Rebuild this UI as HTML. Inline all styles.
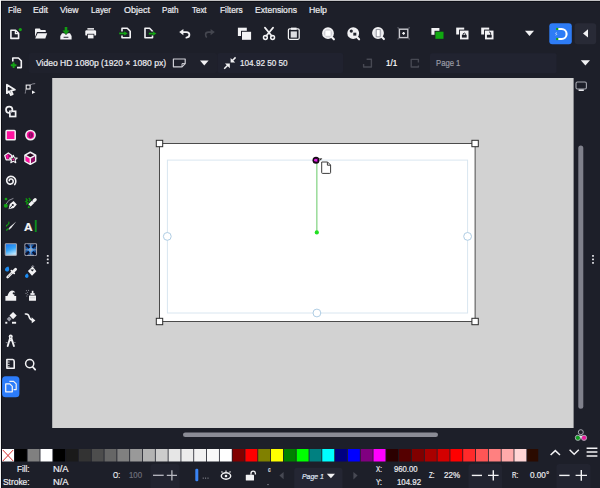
<!DOCTYPE html>
<html><head><meta charset="utf-8"><title>Inkscape</title>
<style>
html,body{margin:0;padding:0;background:#1d1f29;}
body{width:600px;height:488px;overflow:hidden;position:relative;font-family:"Liberation Sans",sans-serif;color:#ececf0;}
#app{position:absolute;left:0;top:0;width:600px;height:488px;background:#1d1f29;overflow:hidden;}
.t{position:absolute;white-space:nowrap;line-height:10px;transform-origin:0 0;-webkit-text-stroke:0.22px;}
.abs{position:absolute;}
svg{position:absolute;left:0;top:0;overflow:hidden;}
</style></head><body>
<div id="app">
<div class="abs" style="left:0;top:0;width:600px;height:1.6px;background:#0e0f16"></div>
<div class="abs" style="left:0;top:0;width:1.8px;height:488px;background:#0e0f16"></div>
<div class="abs" style="left:0;top:0;width:600px;height:0.9px;background:#c2c2c4"></div>
<div class="abs" style="left:0;top:0;width:1.1px;height:488px;background:#f2f2f2"></div>

<svg id="gfx" width="600" height="488" viewBox="0 0 600 488">
<rect x="52.2" y="78" width="521.4" height="350" fill="#d2d2d2"/>
<rect x="159.5" y="143.5" width="315.6" height="178" fill="#ffffff" stroke="#444444" stroke-width="0.95"/>
<rect x="167.4" y="160.1" width="300.2" height="152.9" fill="none" stroke="#d9e6f0" stroke-width="1"/>
<rect x="156.3" y="140.3" width="6.4" height="6.4" fill="#ffffff" stroke="#2c2c2c" stroke-width="1"/>
<rect x="471.90000000000003" y="140.3" width="6.4" height="6.4" fill="#ffffff" stroke="#2c2c2c" stroke-width="1"/>
<rect x="156.3" y="318.3" width="6.4" height="6.4" fill="#ffffff" stroke="#2c2c2c" stroke-width="1"/>
<rect x="471.90000000000003" y="318.3" width="6.4" height="6.4" fill="#ffffff" stroke="#2c2c2c" stroke-width="1"/>
<circle cx="167.3" cy="236.4" r="3.9" fill="#ffffff" stroke="#afcde4" stroke-width="1"/>
<circle cx="467.6" cy="236.4" r="3.9" fill="#ffffff" stroke="#afcde4" stroke-width="1"/>
<circle cx="316.9" cy="313" r="3.9" fill="#ffffff" stroke="#afcde4" stroke-width="1"/>
<line x1="316.8" y1="163" x2="316.8" y2="232" stroke="#9fdd9f" stroke-width="1.6"/>
<circle cx="316.8" cy="232.4" r="2.1" fill="#22e022"/>
<circle cx="316" cy="160.2" r="3.5" fill="#160816"/>
<path d="M314 160.2 L317.4 158.4 L317.4 162 Z" fill="#e418e4"/>
<circle cx="315.5" cy="160.2" r="1.4" fill="#e020e0"/>
<path d="M319 158.6 L322.3 158.2 L320.6 160.6 Z" fill="#333"/>
<path d="M321.7 162 L327.6 162 L330.6 165 L330.6 172.6 Q330.6 173.4 329.8 173.4 L322.5 173.4 Q321.7 173.4 321.7 172.6 Z" fill="#ffffff" stroke="#3c3c3c" stroke-width="1"/>
<path d="M327.4 162.2 L327.4 165.2 L330.4 165.2" fill="none" stroke="#3c3c3c" stroke-width="1"/>
<rect x="183" y="432.5" width="255" height="4.6" rx="2.3" fill="#8b8c96"/>
<rect x="578.3" y="145.4" width="5" height="263.3" rx="2.5" fill="#80818c"/>
<rect x="2.00" y="449" width="12.0" height="12.5" fill="#ffffff"/>
<path d="M2.80 450 L13.20 461 M13.20 450 L2.80 461" stroke="#d83030" stroke-width="1" fill="none"/>
<rect x="14.81" y="449" width="12.0" height="12.5" fill="#000000"/>
<rect x="27.62" y="449" width="12.0" height="12.5" fill="#808080"/>
<rect x="40.43" y="449" width="12.0" height="12.5" fill="#ffffff"/>
<rect x="53.24" y="449" width="12.0" height="12.5" fill="#000000"/>
<rect x="66.05" y="449" width="12.0" height="12.5" fill="#1a1a1a"/>
<rect x="78.86" y="449" width="12.0" height="12.5" fill="#333333"/>
<rect x="91.67" y="449" width="12.0" height="12.5" fill="#4d4d4d"/>
<rect x="104.48" y="449" width="12.0" height="12.5" fill="#666666"/>
<rect x="117.29" y="449" width="12.0" height="12.5" fill="#808080"/>
<rect x="130.10" y="449" width="12.0" height="12.5" fill="#999999"/>
<rect x="142.91" y="449" width="12.0" height="12.5" fill="#b3b3b3"/>
<rect x="155.72" y="449" width="12.0" height="12.5" fill="#cccccc"/>
<rect x="168.53" y="449" width="12.0" height="12.5" fill="#e6e6e6"/>
<rect x="181.34" y="449" width="12.0" height="12.5" fill="#ececec"/>
<rect x="194.15" y="449" width="12.0" height="12.5" fill="#f2f2f2"/>
<rect x="206.96" y="449" width="12.0" height="12.5" fill="#f9f9f9"/>
<rect x="219.77" y="449" width="12.0" height="12.5" fill="#ffffff"/>
<rect x="232.58" y="449" width="12.0" height="12.5" fill="#800000"/>
<rect x="245.39" y="449" width="12.0" height="12.5" fill="#ff0000"/>
<rect x="258.20" y="449" width="12.0" height="12.5" fill="#808000"/>
<rect x="271.01" y="449" width="12.0" height="12.5" fill="#ffff00"/>
<rect x="283.82" y="449" width="12.0" height="12.5" fill="#008000"/>
<rect x="296.63" y="449" width="12.0" height="12.5" fill="#00ff00"/>
<rect x="309.44" y="449" width="12.0" height="12.5" fill="#008080"/>
<rect x="322.25" y="449" width="12.0" height="12.5" fill="#00ffff"/>
<rect x="335.06" y="449" width="12.0" height="12.5" fill="#000080"/>
<rect x="347.87" y="449" width="12.0" height="12.5" fill="#0000ff"/>
<rect x="360.68" y="449" width="12.0" height="12.5" fill="#800080"/>
<rect x="373.49" y="449" width="12.0" height="12.5" fill="#ff00ff"/>
<rect x="386.30" y="449" width="12.0" height="12.5" fill="#2b0000"/>
<rect x="399.11" y="449" width="12.0" height="12.5" fill="#550000"/>
<rect x="411.92" y="449" width="12.0" height="12.5" fill="#800000"/>
<rect x="424.73" y="449" width="12.0" height="12.5" fill="#aa0000"/>
<rect x="437.54" y="449" width="12.0" height="12.5" fill="#d40000"/>
<rect x="450.35" y="449" width="12.0" height="12.5" fill="#ff0000"/>
<rect x="463.16" y="449" width="12.0" height="12.5" fill="#ff2a2a"/>
<rect x="475.97" y="449" width="12.0" height="12.5" fill="#ff5555"/>
<rect x="488.78" y="449" width="12.0" height="12.5" fill="#ff8080"/>
<rect x="501.59" y="449" width="12.0" height="12.5" fill="#ffaaaa"/>
<rect x="514.40" y="449" width="12.0" height="12.5" fill="#ffd5d5"/>
<rect x="527.21" y="449" width="11" height="12.5" fill="#2b0b00"/>

<path d="M10.9 30.3 L15.6 30.3 L18.6 33.3 L18.6 38.4 L10.9 38.4 Z" fill="none" stroke="#f2f2f4" stroke-width="1.6" stroke-linejoin="round"/>
<path d="M15.4 30.5 L15.4 33.6 L18.4 33.6" fill="none" stroke="#f2f2f4" stroke-width="1.3" />
<circle cx="20.3" cy="29.6" r="1.6" fill="#14a514"/>
<path d="M35 29.3 Q35 28.5 35.8 28.5 L39.8 28.5 L40.8 30 L45 30 Q45.8 30 45.8 30.8 L45.8 32 L37 32 L35 37 Z" fill="#f2f2f4" />
<path d="M37.6 33.3 L47.2 33.3 L45.3 38.6 L35.2 38.6 Z" fill="#f2f2f4" />
<path d="M62 33.3 L70 33.3 L71.6 36 L71.6 39.5 L60.3 39.5 L60.3 36 Z" fill="#f2f2f4" />
<path d="M64.7 26.9 L67.3 26.9 L67.3 30.4 L69.6 30.4 L66 34.6 L62.4 30.4 L64.7 30.4 Z" fill="#129c12" stroke="#1d1f29" stroke-width="0.9" paint-order="stroke"/>
<path d="M63.6 37.3 L68.4 37.3" fill="none" stroke="#3a3c46" stroke-width="1.1" />
<rect x="87.4" y="28" width="6.6" height="1.7" fill="#d6d6da"/>
<rect x="85.3" y="30.2" width="10.8" height="5.4" rx="1.2" fill="#f2f2f4"/>
<rect x="87.1" y="33.8" width="7.2" height="5.2" fill="#1d1f29"/>
<rect x="87.9" y="34.6" width="5.6" height="3.8" fill="#f2f2f4"/>
<path d="M122 31.6 L122 28.3 L127.3 28.3 L130.2 31.2 L130.2 37.8 L122 37.8 L122 35.4" fill="none" stroke="#f2f2f4" stroke-width="1.6" stroke-linejoin="round"/>
<path d="M119.2 33.4 L125 33.4" fill="none" stroke="#14a514" stroke-width="1.7" />
<path d="M124.2 31.2 L127.6 33.4 L124.2 35.6 Z" fill="#14a514" />
<path d="M152.5 31.6 L152.5 31.2 L149.6 28.3 L145 28.3 L145 37.8 L152.5 37.8 L152.5 35.4" fill="none" stroke="#f2f2f4" stroke-width="1.6" stroke-linejoin="round"/>
<path d="M148.8 33.6 L154 33.6" fill="none" stroke="#14a514" stroke-width="1.7" />
<path d="M153 31.4 L156.4 33.6 L153 35.8 Z" fill="#14a514" />
<path d="M179.2 32.1 L183.4 28.9 L183.4 35.3 Z" fill="#f2f2f4" />
<path d="M183 32.1 L186.4 32.1 Q189.4 32.1 189.4 34.8 Q189.4 37.4 186.4 37.6" fill="none" stroke="#f2f2f4" stroke-width="1.8" stroke-linecap="round"/>
<path d="M214.8 32.1 L210.6 28.9 L210.6 35.3 Z" fill="#44464f" />
<path d="M211 32.1 L208.4 32.1 Q205.6 32.1 205.6 34.6 Q205.6 36.4 206.4 37" fill="none" stroke="#44464f" stroke-width="1.6" stroke-linecap="round"/>
<rect x="237.9" y="27.7" width="8.9" height="8.3" fill="#f2f2f4"/>
<rect x="241" y="30.8" width="10.1" height="9" fill="#1d1f29"/>
<rect x="242" y="31.8" width="9.1" height="8" fill="#f2f2f4"/>
<path d="M264.9 27.6 L271.8 36 M273.1 27.6 L266.2 36" fill="none" stroke="#f2f2f4" stroke-width="1.7" stroke-linecap="round"/>
<circle cx="265.4" cy="37.5" r="1.9" fill="none" stroke="#f2f2f4" stroke-width="1.5"/>
<circle cx="272.6" cy="37.5" r="1.9" fill="none" stroke="#f2f2f4" stroke-width="1.5"/>
<rect x="288.4" y="28.9" width="10.8" height="10.4" rx="1.2" fill="none" stroke="#f2f2f4" stroke-width="1.2"/>
<rect x="291" y="27.6" width="5.6" height="2.2" fill="#f2f2f4"/>
<rect x="290.7" y="31.4" width="6.2" height="6.2" fill="#dcdce0"/>
<circle cx="328" cy="33.2" r="5.1" fill="#d0d0d6" stroke="#f2f2f4" stroke-width="1.6"/>
<path d="M331.9 37.300000000000004 L333.9 39.300000000000004" fill="none" stroke="#f2f2f4" stroke-width="2.1" stroke-linecap="round"/>
<rect x="325.4" y="30.6" width="5.2" height="5.2" fill="#ffffff"/>
<circle cx="353.2" cy="33.2" r="5.1" fill="#f0f0f2" stroke="#f2f2f4" stroke-width="1.6"/>
<path d="M357.09999999999997 37.300000000000004 L359.09999999999997 39.300000000000004" fill="none" stroke="#f2f2f4" stroke-width="2.1" stroke-linecap="round"/>
<circle cx="351.3" cy="31.1" r="1.6" fill="#23252f"/>
<rect x="353.3" y="32.7" width="3" height="2.9" fill="#23252f"/>
<circle cx="378" cy="33" r="5.1" fill="#e4e4e8" stroke="#f2f2f4" stroke-width="1.6"/>
<path d="M381.9 37.1 L383.9 39.1" fill="none" stroke="#f2f2f4" stroke-width="2.1" stroke-linecap="round"/>
<rect x="376.2" y="29.6" width="4" height="7.2" fill="#ffffff" stroke="#8d8e98" stroke-width="0.9"/>
<rect x="399.4" y="29.2" width="8.4" height="8.4" fill="none" stroke="#c9c9cf" stroke-width="1.4"/>
<path d="M402.2 33.4 L405 33.4 M403.6 32 L403.6 34.8" fill="none" stroke="#f2f2f4" stroke-width="1.3" />
<path d="M397.6 27.4 L398.7 28.5 M409.6 27.4 L408.5 28.5 M397.6 39.4 L398.7 38.3 M409.6 39.4 L408.5 38.3" fill="none" stroke="#6a6c76" stroke-width="1.1" />
<rect x="431.4" y="28" width="8" height="6.8" fill="#f2f2f4"/>
<rect x="434.5" y="30.8" width="9.2" height="8.2" fill="#1d1f29"/>
<rect x="435.4" y="31.7" width="8.1" height="7.1" fill="#10a810"/>
<rect x="456.2" y="27.6" width="8" height="6.9" fill="#f2f2f4"/>
<rect x="459.09999999999997" y="29.6" width="10.4" height="10.6" fill="#1d1f29"/>
<rect x="460.0" y="30.6" width="8.5" height="8.8" fill="#f2f2f4"/>
<rect x="461.9" y="34.8" width="4.8" height="2.8" fill="#1d1f29"/>
<path d="M463.1 34.8 L463.1 33.8 Q464.3 32.2 465.5 33.8 L465.5 34.8" fill="none" stroke="#1d1f29" stroke-width="0.9" />
<rect x="481.2" y="27.6" width="8" height="6.9" fill="#f2f2f4"/>
<rect x="484.09999999999997" y="29.6" width="10.4" height="10.6" fill="#1d1f29"/>
<rect x="485.0" y="30.6" width="8.5" height="8.8" fill="#f2f2f4"/>
<rect x="486.9" y="34.8" width="4.8" height="2.8" fill="#1d1f29"/>
<path d="M490.6 34.8 L490.6 32.6 Q490 31.8 489 32.2" fill="none" stroke="#1d1f29" stroke-width="0.9" />
<path d="M525 30.8 L534 30.8 L529.5 36 Z" fill="#f2f2f4" />
<rect x="549.3" y="23.3" width="22.5" height="21" rx="3" fill="#2e7cf6"/>
<path d="M557.8 29 L561.6 29 A5 5 0 0 1 561.6 39 L557.8 39" fill="none" stroke="#ffffff" stroke-width="2.1" />
<rect x="556.2" y="27.9" width="2.1" height="2.2" fill="#14a514"/>
<rect x="556.2" y="37.9" width="2.1" height="2.2" fill="#14a514"/>
<path d="M556.8 32.6 L555.6 33.2 L556.8 34.4 L555.6 35.2" fill="none" stroke="#e8f0ff" stroke-width="0.7" />
<rect x="574.6" y="23.3" width="21.6" height="21" rx="3" fill="#282a36"/>
<path d="M583 33.4 L588 29.2 L588 37.6 Z" fill="#f2f2f4" />
<rect x="28.5" y="53" width="188.5" height="20" rx="2" fill="#1f212c"/>
<rect x="217.6" y="53" width="125.6" height="20" rx="2" fill="#20222f"/>
<rect x="430" y="53.2" width="126.6" height="20" rx="2" fill="#212330"/>
<path d="M12.8 61.4 L12.8 58 L18.4 58 L21.3 60.9 L21.3 67.6 L17 67.6" fill="none" stroke="#f2f2f4" stroke-width="1.6" stroke-linejoin="round"/>
<path d="M17 60 L18.8 60 L18.8 62 M18.8 62.4 L18.8 65.4 L17.4 65.4" fill="none" stroke="#191b24" stroke-width="1" />
<path d="M13.6 62.4 L13.6 68 M10.8 65.2 L16.4 65.2" fill="none" stroke="#14a514" stroke-width="1.9" />
<path d="M173.4 59 L185.2 59 L185.2 63.6 L182 66.8 L173.4 66.8 Z" fill="none" stroke="#cfcfd6" stroke-width="1.2" stroke-linejoin="round"/>
<path d="M185.2 63.6 L182 63.6 L182 66.8" fill="none" stroke="#cfcfd6" stroke-width="1.0" />
<path d="M200 60.6 L208.6 60.6 L204.3 65.6 Z" fill="#f2f2f4" />
<path d="M230.6 58 L230.6 62.6 L235.2 62.6 Z" fill="#f2f2f4" />
<path d="M235.6 57.4 L232.2 60.8" fill="none" stroke="#f2f2f4" stroke-width="1.5" />
<path d="M225 63.4 L229.8 63.4 L229.8 68.2 Z" fill="#f2f2f4" />
<path d="M224.2 68.8 L228 65" fill="none" stroke="#f2f2f4" stroke-width="1.5" />
<path d="M366.6 59.2 L371.4 59.2 L371.4 67 L363.6 67 L363.6 64" fill="none" stroke="#474953" stroke-width="1.4" stroke-linejoin="round"/>
<path d="M418.4 62.4 L418.4 59.4 L411.2 59.4 L411.2 67 L418.4 67 L418.4 65.6" fill="none" stroke="#474953" stroke-width="1.4" stroke-linejoin="round"/>
<path d="M580.8 60.2 L590 60.2 L585.4 65.4 Z" fill="#f2f2f4" />
<rect x="576" y="82" width="10.4" height="7" rx="1.4" fill="none" stroke="#a6a7b0" stroke-width="1.1"/>
<rect x="578.6" y="89.4" width="5.2" height="1.6" fill="#e8e8ec"/>
<rect x="46.8" y="254.95000000000002" width="1.9" height="1.9" rx="0.5" fill="#e4e4e8"/>
<rect x="592.05" y="254.95000000000002" width="1.9" height="1.9" rx="0.5" fill="#e4e4e8"/>
<rect x="46.8" y="258.45" width="1.9" height="1.9" rx="0.5" fill="#e4e4e8"/>
<rect x="592.05" y="258.45" width="1.9" height="1.9" rx="0.5" fill="#e4e4e8"/>
<rect x="46.8" y="261.95" width="1.9" height="1.9" rx="0.5" fill="#e4e4e8"/>
<rect x="592.05" y="261.95" width="1.9" height="1.9" rx="0.5" fill="#e4e4e8"/>
<path d="M6.9 84.8 L6.9 93.2 L9.1 91.3 L10.9 95 L12.7 94.1 L11 90.6 L14.9 89.7 Z" fill="none" stroke="#f2f2f4" stroke-width="1.8" stroke-linejoin="round"/>
<path d="M30.2 85 Q32.6 83.6 35.2 83.6 M26 89.2 Q25.4 91.4 25.2 93.6" fill="none" stroke="#8e8f99" stroke-width="0.9" />
<rect x="26.2" y="85.1" width="3.9" height="3.9" fill="none" stroke="#f2f2f4" stroke-width="1.1"/>
<path d="M32 90.6 L35.4 92.3 L32 94.1 Z" fill="#f2f2f4" />
<circle cx="9.2" cy="109.8" r="3.2" fill="none" stroke="#f2f2f4" stroke-width="1.7"/>
<rect x="9.9" y="111.3" width="5.7" height="5.2" fill="#1d1f29" stroke="#f2f2f4" stroke-width="1.7"/>
<path d="M10 111.4 L12.3 111.4 Q12 113.2 10 113.6 Z" fill="#9c9da6" />
<rect x="6.1" y="130.6" width="9.1" height="9.2" rx="0.8" fill="#ff12a0" stroke="#f2f2f4" stroke-width="1.5"/>
<circle cx="30.5" cy="135.1" r="4.6" fill="#ff12a0" stroke="#f2f2f4" stroke-width="1.6"/>
<ellipse cx="30.7" cy="135.1" rx="2.3" ry="2.9" fill="#8c0a62"/>
<path d="M30.6 133.2 L30.6 137" fill="none" stroke="#c2128a" stroke-width="0.7" />
<path d="M8.3 152.9 L11.9 155.5 L10.5 159.8 L6.1 159.8 L4.7 155.5 Z" fill="#8c0a62" stroke="#f2f2f4" stroke-width="1.2" stroke-linejoin="round"/>
<path d="M6.2 155.4 L8.3 154 L8.6 158.6 L6.8 158.8 Z" fill="#ff12a0" />
<path d="M13.3 155.3 L14.4 157.9 L17.2 158.1 L15.1 159.9 L15.8 162.7 L13.3 161.2 L10.8 162.7 L11.5 159.9 L9.4 158.1 L12.2 157.9 Z" fill="#2a0a22" stroke="#f2f2f4" stroke-width="1.1" stroke-linejoin="round"/>
<circle cx="13.3" cy="159.4" r="0.9" fill="#ff12a0"/>
<path d="M30.3 152.2 L35.6 155.1 L35.6 161.2 L30.3 164.3 L25 161.2 L25 155.1 Z" fill="#2a0a22" stroke="#f2f2f4" stroke-width="1.6" stroke-linejoin="round"/>
<path d="M25.6 155.7 L30.3 158.4 L30.3 163.6 L25.6 160.9 Z" fill="#ff12a0" />
<path d="M35 155.7 L30.3 158.4 L30.3 163.6 L35 160.9 Z" fill="#8c0a62" />
<path d="M25 155.1 L30.3 158.2 L35.6 155.1 M30.3 158.2 L30.3 164.3" fill="none" stroke="#f2f2f4" stroke-width="1.4" />
<path d="M9.26 180.69 L9.26 180.32 L9.37 179.95 L9.58 179.59 L9.89 179.28 L10.30 179.06 L10.77 178.94 L11.29 178.95 L11.80 179.09 L12.29 179.38 L12.71 179.80 L13.01 180.33 L13.18 180.94 L13.19 181.61 L13.02 182.28 L12.68 182.91 L12.17 183.45 L11.53 183.85 L10.77 184.09 L9.96 184.14 L9.13 183.97 L8.35 183.59 L7.67 183.01 L7.15 182.26 L6.82 181.37 L6.72 180.41 L6.86 179.43 L7.26 178.49 L7.89 177.66 L8.74 177.00 L9.74 176.56 L10.85 176.38 L11.99 176.48 L13.09 176.87 L14.09 177.54 L14.90 178.46 L15.47 179.57 L15.74 180.82 L15.71 182.11 L15.34 183.39 L14.65 184.55" fill="none" stroke="#f2f2f4" stroke-width="1.6" stroke-linecap="round" stroke-linejoin="round"/>
<path d="M6.2 204 Q7.8 199.6 13.4 198.4" fill="none" stroke="#8e8f99" stroke-width="1.0" />
<circle cx="6" cy="199" r="1.35" fill="#14a514"/>
<circle cx="5.8" cy="205.7" r="2" fill="#14a514"/>
<path d="M8.6 209.2 L9.8 204 L13.6 201 L16.8 204.4 L13.8 208 Z" fill="#f2f2f4" />
<path d="M9.4 208.4 L12.6 205.2" fill="none" stroke="#1d1f29" stroke-width="1.0" />
<circle cx="12.8" cy="205" r="1.05" fill="#1d1f29"/>
<path d="M25.8 198.4 L27.4 200.2 L25.8 201.6 L28 202.8 L26.2 204.4 M28.8 198 L30.2 199.8 L29 201.4" fill="none" stroke="#0f9a0f" stroke-width="1.3" />
<path d="M27.6 208.3 L28.4 205.4 L30.4 207.4 Z" fill="#14a514" />
<path d="M29.5 205.4 L33 201.9" fill="none" stroke="#f2f2f4" stroke-width="3.3" />
<path d="M34 200.9 L35.2 199.7" fill="none" stroke="#f2f2f4" stroke-width="3.2" stroke-linecap="round"/>
<path d="M8.8 221.6 Q9.6 223.4 8 224.4 Q6 225.4 6.4 226.6" fill="none" stroke="#14a514" stroke-width="1.1" />
<path d="M6.6 230.6 Q7.2 228.6 8.6 229.2" fill="none" stroke="#14a514" stroke-width="1.5" />
<path d="M16.2 221.4 L10.6 228.8 L9.2 227.6 Z" fill="#f2f2f4" />
<path d="M9.9 228.2 L8.9 229.4" fill="none" stroke="#d0d0d6" stroke-width="1.2" />
<rect x="34.8" y="220" width="1.9" height="12" fill="#0c8e1e"/>
<defs><linearGradient id="gr1" x1="0.2" y1="0" x2="0.6" y2="1"><stop offset="0" stop-color="#1776ee"/><stop offset="0.5" stop-color="#36a4f6"/><stop offset="1" stop-color="#c6ecff"/></linearGradient><radialGradient id="gr2" cx="0.5" cy="0.5" r="0.6"><stop offset="0" stop-color="#9fd8ff"/><stop offset="0.45" stop-color="#1a74d8"/><stop offset="1" stop-color="#0a1838"/></radialGradient></defs>
<rect x="5.3" y="243.8" width="11.2" height="11.6" rx="0.8" fill="url(#gr1)" stroke="#a2a3ad" stroke-width="1.1"/>
<rect x="24.9" y="243.8" width="11.6" height="11.6" rx="0.8" fill="url(#gr2)" stroke="#a2a3ad" stroke-width="1.1"/>
<path d="M26 244.6 L29.4 248 M35.6 245 L32.4 248 M25.8 254.6 L29 251.6 M35.6 254.8 L32.6 251.8" fill="none" stroke="#0a1230" stroke-width="2.2" />
<path d="M30.7 244.2 L30.7 255 M25.2 249.8 L36.2 249.8" fill="none" stroke="#9c9da8" stroke-width="0.8" />
<path d="M8.4 266.6 Q10 269.6 8.4 271.2 Q6.2 272.4 5 270.2 Q4.6 267.6 8.4 266.6 Z" fill="#1b8cf2" />
<path d="M7.6 277.2 L12.4 272.4" fill="none" stroke="#f2f2f4" stroke-width="2.6" stroke-linecap="round"/>
<path d="M8.2 276.6 L11.4 273.4" fill="none" stroke="#1d1f29" stroke-width="0.7" stroke-dasharray="1 0.8"/>
<path d="M11.4 270.6 L14.2 273.4" fill="none" stroke="#f2f2f4" stroke-width="1.8" stroke-linecap="round"/>
<path d="M13.4 271.4 L15.6 269.2" fill="none" stroke="#f2f2f4" stroke-width="2.8" stroke-linecap="round"/>
<path d="M27.2 273.2 Q29.4 275.8 28 277.4 Q26.2 278.6 25 276.8 Q24.4 274.8 27.2 273.2 Z" fill="#1b8cf2" />
<path d="M32.6 266.6 L36.4 271.2 L32 275.8 L27.9 271 Z" fill="#f2f2f4" />
<path d="M30.4 269.4 L34 269.6 L32.4 271.4 Z" fill="#1d1f29" />
<path d="M31.4 267 L32.8 265.6 L34 266.8" fill="none" stroke="#c8c8d0" stroke-width="0.8" />
<path d="M5.4 296 L7.4 296 Q9 291 12 290.6 Q14.6 290.6 15.2 292.8 Q13.4 291.8 12.6 293 Q12.4 294.6 14.6 294.6 L14.2 296 L16.2 296 L16.2 300.8 L5.4 300.8 Z" fill="#f2f2f4" />
<rect x="29" y="295.6" width="7" height="5.2" rx="0.6" fill="#f2f2f4"/>
<rect x="30.4" y="293" width="4.2" height="2" fill="#dcdce2"/>
<rect x="31.8" y="290.8" width="1.6" height="2.4" fill="#f2f2f4"/>
<path d="M29.6 297.8 L35.4 297.8" fill="none" stroke="#c4c4cc" stroke-width="0.7" />
<circle cx="26.4" cy="290.6" r="0.55" fill="#8e8f99"/>
<circle cx="27.6" cy="292.2" r="0.55" fill="#8e8f99"/>
<circle cx="26" cy="293.4" r="0.55" fill="#8e8f99"/>
<circle cx="27.8" cy="294.6" r="0.55" fill="#8e8f99"/>
<circle cx="26.8" cy="296" r="0.55" fill="#8e8f99"/>
<circle cx="28.6" cy="290.4" r="0.55" fill="#8e8f99"/>
<path d="M13.1 312 L16.7 315.6 L13.1 319.2 L9.5 315.6 Z" fill="#f2f2f4" />
<path d="M9.2 316.6 L11.7 319.1 L9.2 321.6 L6.7 319.1 Z" fill="#9b9ca6" />
<rect x="5.3" y="321.8" width="2" height="1.9" fill="#f2f2f4"/>
<rect x="12" y="321.8" width="4.1" height="1.9" fill="#f2f2f4"/>
<path d="M25.4 314 Q28.4 313.6 29 316.4 Q29.6 319.4 32 320" fill="none" stroke="#f2f2f4" stroke-width="1.6" stroke-linecap="round"/>
<path d="M31.6 317.2 L35.4 320.4 L31.8 323.2 Z" fill="#f2f2f4" />
<path d="M10.7 336 L7.7 346 M10.7 336 L13.9 346" fill="none" stroke="#f2f2f4" stroke-width="1.9" stroke-linecap="round"/>
<circle cx="10.7" cy="336.6" r="2" fill="#f2f2f4"/>
<circle cx="10.7" cy="337" r="0.6" fill="#1d1f29"/>
<path d="M9 340.6 L12.4 340.6" fill="none" stroke="#f2f2f4" stroke-width="1.2" />
<path d="M5.8 342.6 L7.6 342.6 M13.8 342.6 L15.6 342.6" fill="none" stroke="#b0b0b8" stroke-width="0.7" />
<path d="M6.9 359.5 L12.6 359.5 Q14.2 359.7 14.2 361.4 L14.2 368.2 L6.9 368.2 Z" fill="none" stroke="#f2f2f4" stroke-width="1.6" stroke-linejoin="round"/>
<path d="M7.6 362 L9.6 362 M7.6 364.4 L9.6 364.4 M7.6 366.8 L9.6 366.8" fill="none" stroke="#f2f2f4" stroke-width="0.8" />
<circle cx="29.7" cy="363.6" r="4.1" fill="none" stroke="#f2f2f4" stroke-width="1.5"/>
<path d="M32.8 367 L35.2 369.6" fill="none" stroke="#f2f2f4" stroke-width="1.8" stroke-linecap="round"/>
<rect x="2.1" y="376.2" width="17.3" height="21.1" rx="3.5" fill="#2c7cfa"/>
<path d="M9.4 381.3 L13.6 381.3 L16.2 383.9 L16.2 389.6 L13.6 389.6" fill="none" stroke="#f2f2f4" stroke-width="1.2" stroke-linejoin="round"/>
<path d="M5.7 383.9 L9.8 383.9 L12.3 386.4 L12.3 391.8 L5.7 391.8 Z" fill="none" stroke="#f2f2f4" stroke-width="1.3" stroke-linejoin="round"/>
<rect x="150.5" y="464" width="29" height="26" rx="3" fill="#222430"/>
<rect x="468.5" y="464" width="33.5" height="26" rx="3" fill="#222430"/>
<rect x="556.5" y="464" width="34" height="26" rx="3" fill="#222430"/>
<path d="M153 475.3 L163.7 475.3" fill="none" stroke="#b9bac2" stroke-width="1.3" />
<path d="M166.8 475.3 L177 475.3 M171.9 470.3 L171.9 480.6" fill="none" stroke="#b9bac2" stroke-width="1.3" />
<rect x="195.3" y="468.8" width="3" height="12.5" rx="1.2" fill="#3a84f4"/>
<circle cx="203.2" cy="478.1" r="0.6" fill="#9a9ba5"/>
<circle cx="205.6" cy="478.1" r="0.6" fill="#9a9ba5"/>
<circle cx="208" cy="478.1" r="0.6" fill="#9a9ba5"/>
<ellipse cx="226" cy="476" rx="4.7" ry="3.2" fill="none" stroke="#f2f2f4" stroke-width="1.4"/>
<circle cx="226" cy="476" r="1.3" fill="#f2f2f4"/>
<path d="M222.4 472.6 L221.6 471.4 M226 471.9 L226 470.6 M229.6 472.6 L230.4 471.4" fill="none" stroke="#f2f2f4" stroke-width="1.1" />
<rect x="245.8" y="474.8" width="8.2" height="5.8" rx="0.6" fill="#f2f2f4"/>
<path d="M251 474.8 L251 473.4 Q251 471.2 253.2 471.2 Q255.4 471.2 255.4 473.4 L255.4 474.4" fill="none" stroke="#f2f2f4" stroke-width="1.3" />
<circle cx="268" cy="484.6" r="0.6" fill="#b0b0b8"/>
<rect x="294.2" y="467.8" width="48.3" height="24" rx="3" fill="#242633"/>
<path d="M279.4 475.6 L283.6 472 L283.6 479.2 Z" fill="#474953" />
<path d="M357.6 475.6 L353.4 472 L353.4 479.4 Z" fill="#474953" />
<path d="M326.8 473.8 L335 473.8 L330.9 478.3 Z" fill="#f2f2f4" />
<path d="M471.8 475.4 L482 475.4" fill="none" stroke="#f2f2f4" stroke-width="1.4" />
<path d="M488 475.4 L498.6 475.4 M493.3 470.2 L493.3 480.6" fill="none" stroke="#f2f2f4" stroke-width="1.4" />
<path d="M559.2 475.4 L569.6 475.4" fill="none" stroke="#f2f2f4" stroke-width="1.4" />
<path d="M575.6 475.4 L587 475.4 M581.3 470 L581.3 480.8" fill="none" stroke="#f2f2f4" stroke-width="1.4" />
<path d="M550.6 455 L555.3 450.6 L560 455" fill="none" stroke="#f2f2f4" stroke-width="1.5" />
<path d="M569.6 449.8 L574.2 454.2 L578.8 449.8" fill="none" stroke="#f2f2f4" stroke-width="1.5" />
<path d="M586.6 448.2 L597.4 448.2 M586.6 452.1 L597.4 452.1 M586.6 456 L597.4 456" fill="none" stroke="#f2f2f4" stroke-width="1.5" />
<circle cx="580.8" cy="432.2" r="2.5" fill="none" stroke="#a8a9b2" stroke-width="1"/>
<circle cx="577.9" cy="437.8" r="2.6" fill="#10a020" stroke="#a8a9b2" stroke-width="1"/>
<circle cx="584" cy="437.8" r="2.6" fill="#e8189c" stroke="#a8a9b2" stroke-width="1"/>
<circle cx="580.9" cy="436.6" r="1.2" fill="#e6e6ea"/>

</svg>
<div id="labels">
<span class="t" style="left:7.60px;top:4.94px;font-size:9.7px;color:#ececf0;transform:scaleX(0.8445);">File</span>
<span class="t" style="left:33.00px;top:4.94px;font-size:9.7px;color:#ececf0;transform:scaleX(0.8974);">Edit</span>
<span class="t" style="left:60.00px;top:4.94px;font-size:9.7px;color:#ececf0;transform:scaleX(0.8921);">View</span>
<span class="t" style="left:91.00px;top:4.94px;font-size:9.7px;color:#ececf0;transform:scaleX(0.8243);">Layer</span>
<span class="t" style="left:124.00px;top:4.94px;font-size:9.7px;color:#ececf0;transform:scaleX(0.9274);">Object</span>
<span class="t" style="left:162.40px;top:4.94px;font-size:9.7px;color:#ececf0;transform:scaleX(0.8319);">Path</span>
<span class="t" style="left:192.40px;top:4.94px;font-size:9.7px;color:#ececf0;transform:scaleX(0.8207);">Text</span>
<span class="t" style="left:219.60px;top:4.94px;font-size:9.7px;color:#ececf0;transform:scaleX(0.8635);">Filters</span>
<span class="t" style="left:255.00px;top:4.94px;font-size:9.7px;color:#ececf0;transform:scaleX(0.8852);">Extensions</span>
<span class="t" style="left:309.40px;top:4.94px;font-size:9.7px;color:#ececf0;transform:scaleX(0.9023);">Help</span>
<span class="t" style="left:35.80px;top:57.94px;font-size:9.7px;color:#ececf0;transform:scaleX(0.8838);">Video HD 1080p (1920 × 1080 px)</span>
<span class="t" style="left:240.00px;top:57.94px;font-size:9.7px;color:#ececf0;transform:scaleX(0.8422);">104.92 50 50</span>
<span class="t" style="left:385.90px;top:57.94px;font-size:9.7px;color:#ffffff;transform:scaleX(0.8380);">1/1</span>
<span class="t" style="left:435.60px;top:57.94px;font-size:9.7px;color:#9b9ca6;transform:scaleX(0.7937);">Page 1</span>
<span class="t" style="left:17.00px;top:464.28px;font-size:9.3px;color:#ececf0;transform:scaleX(0.8712);">Fill:</span>
<span class="t" style="left:3.00px;top:477.18px;font-size:9.3px;color:#ececf0;transform:scaleX(0.9029);">Stroke:</span>
<span class="t" style="left:53.00px;top:464.28px;font-size:9.3px;color:#ececf0;transform:scaleX(1.0063);">N/A</span>
<span class="t" style="left:53.00px;top:477.18px;font-size:9.3px;color:#ececf0;transform:scaleX(1.0063);">N/A</span>
<span class="t" style="left:113.00px;top:470.38px;font-size:9.3px;color:#ececf0;transform:scaleX(0.7130);">O:</span>
<span class="t" style="left:129.00px;top:470.38px;font-size:9.3px;color:#6e707b;transform:scaleX(0.8378);">100</span>
<span class="t" style="left:301.70px;top:471.56px;font-size:7.9px;color:#dfe3f2;transform:scaleX(0.8786);font-style:italic;">Page 1</span>
<span class="t" style="left:376.00px;top:464.28px;font-size:9.3px;color:#ececf0;transform:scaleX(0.6828);">X:</span>
<span class="t" style="left:376.00px;top:477.18px;font-size:9.3px;color:#ececf0;transform:scaleX(0.7252);">Y:</span>
<span class="t" style="left:394.40px;top:464.28px;font-size:9.3px;color:#ececf0;transform:scaleX(0.8297);">960.00</span>
<span class="t" style="left:397.00px;top:477.18px;font-size:9.3px;color:#ececf0;transform:scaleX(0.8437);">104.92</span>
<span class="t" style="left:429.00px;top:470.38px;font-size:9.3px;color:#ececf0;transform:scaleX(0.6655);">Z:</span>
<span class="t" style="left:444.00px;top:470.38px;font-size:9.3px;color:#ececf0;transform:scaleX(0.8596);">22%</span>
<span class="t" style="left:511.80px;top:470.38px;font-size:9.3px;color:#ececf0;transform:scaleX(0.6667);">R:</span>
<span class="t" style="left:529.50px;top:470.38px;font-size:9.3px;color:#ececf0;transform:scaleX(0.8799);">0.00°</span>
<span class="t" style="left:24.40px;top:221.75px;font-size:11.7px;color:#f4f4f6;transform:scaleX(1.0178);font-weight:bold;">A</span>
<span class="t" style="left:267.60px;top:465.45px;font-size:6.5px;color:#d0d0d6;transform:scaleX(0.7469);font-weight:bold;">c</span>

</div>
</div>
</body></html>
